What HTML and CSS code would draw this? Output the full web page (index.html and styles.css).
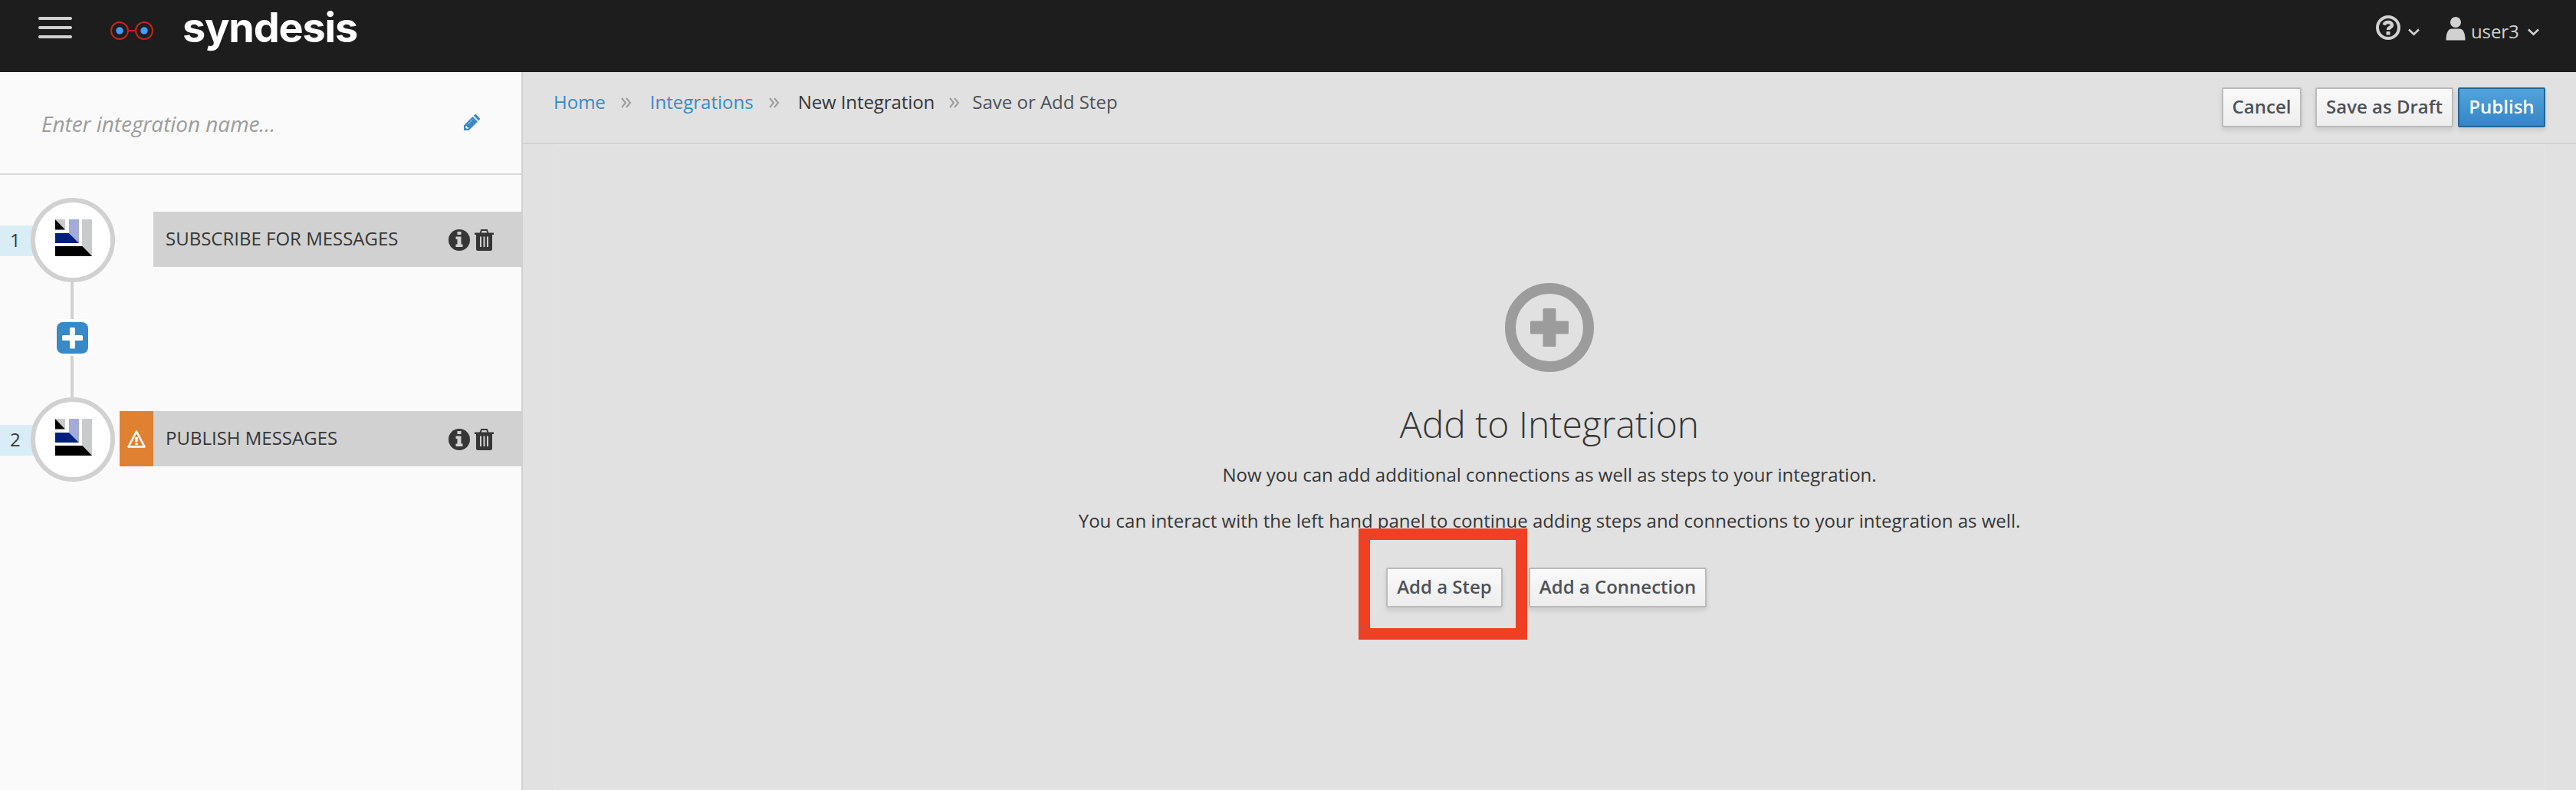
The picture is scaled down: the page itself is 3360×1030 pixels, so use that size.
FILE: index.html
```html
<!DOCTYPE html>
<html lang="en">
<head>
<meta charset="utf-8">
<title>Syndesis</title>
<link rel="stylesheet" href="styles.css">
</head>
<body>
<svg class="defs" width="0" height="0">
  <defs>
    <symbol id="connector" viewBox="0 0 48 48">
      <path fill="#fff" d="M0 0h48v48H0z"/>
      <path fill="#c9cacc" d="M0 0h13v13zM35 0h13v48L35 34z"/>
      <path d="M0 0l13 13.500H0zM0 35h35.500L48 48H0z"/>
      <path fill="#a3acd8" d="M18 0h13v31L18 18z"/>
      <path fill="#00207f" d="M0 18h18l13 13H0z"/>
    </symbol>
    <symbol id="info" viewBox="0 0 28 28">
      <circle cx="14" cy="14" r="14" fill="#363636"/>
      <path fill="#d1d1d1" d="M11.500 3h5v4h-5zM9.500 9.500h7v10h2V23h-9v-3.500h2V13h-2z"/>
    </symbol>
    <symbol id="trash" viewBox="0 0 25 28">
      <path fill="none" stroke="#363636" stroke-width="2" d="M7.500 5l1.500-4h7l1.500 4"/>
      <path fill="#363636" d="M0 4.500h25V7h-2v18.500a2.500 2.500 0 0 1-2.500 2.500h-16A2.500 2.500 0 0 1 2 25.500V7H0z"/>
      <path stroke="#d1d1d1" stroke-width="2" d="M8 9.500V23M12.500 9.500V23M17 9.500V23"/>
    </symbol>
    <symbol id="caret" viewBox="0 0 15 10">
      <path fill="none" stroke="#d1d1d1" stroke-width="2.600" d="M1 1.500l6.500 6.200L14 1.500"/>
    </symbol>
    <symbol id="sep" viewBox="0 0 14 14">
      <path fill="none" stroke="#9c9c9c" stroke-width="2" d="M1 1l5 6-5 6M7 1l5 6-5 6"/>
    </symbol>
  </defs>
</svg>
<header class="masthead">
  <button class="menu" aria-label="Menu"><i></i><i></i><i></i></button>
  <svg class="glasses" width="56" height="24" viewBox="0 0 56 24">
    <g fill="none" stroke="#bd271b" stroke-width="2"><circle cx="12" cy="12" r="11"/><circle cx="44" cy="12" r="11"/><path d="M23 12h10"/></g>
    <g fill="#419ff4"><circle cx="12" cy="12" r="4.700"/><circle cx="44" cy="12" r="4.700"/></g>
  </svg>
  <span class="brand">syndesis</span>
  <svg class="help" width="32" height="32" viewBox="0 0 32 32">
    <circle cx="16" cy="16" r="14" fill="none" stroke="#d1d1d1" stroke-width="4"/>
    <path fill="none" stroke="#d1d1d1" stroke-width="4.400" d="M10.500 12.500c1-2.500 3-3.500 5.500-3.500 3 0 5 1.500 5 3.800 0 3.200-5 2.700-5 6.200"/>
    <path fill="#d1d1d1" d="M13.500 21h5v4.500h-5z"/>
  </svg>
  <svg class="help-caret" width="15" height="10"><use href="#caret"/></svg>
  <svg class="user-icon" width="26" height="31" viewBox="0 0 26 31">
    <circle cx="13" cy="7" r="7" fill="#d1d1d1"/>
    <path fill="#d1d1d1" d="M8 15.500h10c5 0 7.500 6 7.500 15H.5c0-9 2.500-15 7.500-15z"/>
  </svg>
  <span class="user">user3</span>
  <svg class="user-caret" width="15" height="10"><use href="#caret"/></svg>
</header>
<div class="layout">
  <aside class="sidebar">
    <div class="name-row">
      <span class="name">Enter integration name...</span>
      <svg class="pencil" width="21" height="21" viewBox="0 0 21 21">
        <path fill="#3989c6" d="M0 21v-6.500L11.500 3l6.500 6.500L6.500 21zM12.700 1.800L14 .5a1.600 1.600 0 0 1 2.200 0L20.500 4.800a1.600 1.600 0 0 1 0 2.200L19.200 8.300z"/>
        <path fill="#fafafa" d="M2.200 15.500l1.800-.5v2h2l-.5 2H4l-1.800-1.800z"/>
        <path fill="none" stroke="#a9cde8" d="M5 13.200L11.800 6.400"/>
      </svg>
    </div>
    <div class="flow">
      <div class="step">
        <span class="num">1</span>
        <span class="ring"><svg width="48" height="48"><use href="#connector"/></svg></span>
        <span class="flag"></span>
        <div class="card"><span class="label">SUBSCRIBE FOR MESSAGES</span><svg width="28" height="28"><use href="#info"/></svg><svg width="25" height="28"><use href="#trash"/></svg></div>
      </div>
      <div class="link">
        <span class="insert"><svg width="41" height="41" viewBox="0 0 41 41"><rect width="41" height="41" rx="8" fill="#3989c6"/><path fill="#fff" d="M18.500 7h4q1.500 0 1.500 1.500V17h8.500q1.500 0 1.500 1.500v4q0 1.500-1.500 1.500H24v9q0 1.500-1.500 1.500h-4Q17 34.500 17 33v-9H8.500Q7 24 7 22.500v-4Q7 17 8.500 17H17V8.500Q17 7 18.500 7z"/></svg></span>
      </div>
      <div class="step">
        <span class="num">2</span>
        <span class="ring"><svg width="48" height="48"><use href="#connector"/></svg></span>
        <span class="flag warn"><svg width="24" height="23" viewBox="0 0 24 23"><path fill="none" stroke="#fff" stroke-width="2.600" stroke-linejoin="round" d="M12 1.600L22.500 21.500h-21z"/><path fill="#fff" d="M10 9h4l-.6 6.500h-2.800zM10.200 16.700h3.600v2.500h-3.600z"/></svg></span>
        <div class="card"><span class="label">PUBLISH MESSAGES</span><svg width="28" height="28"><use href="#info"/></svg><svg width="25" height="28"><use href="#trash"/></svg></div>
      </div>
    </div>
  </aside>
  <main class="main">
    <div class="toolbar">
      <nav class="crumbs">
        <a>Home</a><svg width="14" height="14"><use href="#sep"/></svg>
        <a>Integrations</a><svg width="14" height="14"><use href="#sep"/></svg>
        <span class="parent">New Integration</span><svg class="last-sep" width="14" height="14"><use href="#sep"/></svg>
        <span class="current">Save or Add Step</span>
      </nav>
      <div class="actions">
        <button class="btn cancel">Cancel</button>
        <button class="btn draft">Save as Draft</button>
        <button class="btn primary">Publish</button>
      </div>
    </div>
    <section class="blank">
      <svg width="116" height="116" viewBox="0 0 116 116"><circle cx="58" cy="58" r="51" fill="none" stroke="#9c9c9c" stroke-width="14"/><path fill="#9c9c9c" d="M51 33h14q1.500 0 1.500 1.500v15h15q1.500 0 1.500 1.500v14q0 1.500-1.500 1.500h-15v15q0 1.500-1.500 1.500H51q-1.500 0-1.500-1.500v-15h-15Q33 66.500 33 65V51q0-1.500 1.500-1.500h15v-15Q49.500 33 51 33z"/></svg>
      <h1>Add to Integration</h1>
      <p>Now you can add additional connections as well as steps to your integration.</p>
      <p>You can interact with the left hand panel to continue adding steps and connections to your integration as well.</p>
      <div class="choices">
        <div class="marked"><button class="btn step-btn">Add a Step</button><i class="marker"></i></div>
        <button class="btn conn-btn">Add a Connection</button>
      </div>
    </section>
  </main>
</div>
</body>
</html>
```
FILE: styles.css
```css
* { box-sizing: border-box; }
body {
  margin: 0;
  height: 1030px;
  overflow: hidden;
  display: flex;
  flex-direction: column;
  background: #e1e1e1;
  color: #363636;
  font: 24px/40px "Open Sans", sans-serif;
}
svg { display: block; flex: none; }
.defs { position: absolute; }
button { border: 0; padding: 0; background: none; font: inherit; }
.masthead {
  height: 94px;
  flex: none;
  display: flex;
  align-items: flex-start;
  padding-left: 50px;
  background: #1d1d1d;
  color: #d1d1d1;
}
.menu { width: 44px; margin-top: 22px; display: flex; flex-direction: column; gap: 8px; }
.menu i { height: 4px; border-radius: 2px; background: #d1d1d1; }
.glasses { margin: 28px 0 0 50px; }
.brand {
  width: 230px;
  margin: 6px 0 0 38px;
  color: #fff;
  font: 700 54px/60px Inter, sans-serif;
  letter-spacing: -1.2px;
  white-space: nowrap;
}
.help { margin: 20px 0 0 auto; }
.help-caret { margin: 37px 34px 0 10px; }
.user-icon { margin-top: 22px; }
.user { width: 64px; margin: 21px 10px 0 7px; font-weight: 500; letter-spacing: -.1px; white-space: nowrap; }
.user-caret { margin: 37px 48px 0 0; }
.layout { flex: 1; display: flex; }
.sidebar { width: 682px; border-right: 2px solid #d1d1d1; background: #fafafa; }
.name-row {
  height: 134px;
  display: flex;
  align-items: center;
  justify-content: space-between;
  padding: 2px 54px 0 54px;
  border-bottom: 2px solid #d9d9d9;
  color: #9c9c9c;
}
.name { font-size: 28px; font-style: italic; letter-spacing: -.06px; }
.pencil { margin-bottom: 3px; }
.flow { padding-top: 30px; }
.step { height: 110px; display: flex; align-items: center; }
.num {
  width: 50px;
  height: 40px;
  margin: 2px -10px 0 0;
  padding-left: 13px;
  background: #d9edf7;
  line-height: 38px;
}
.ring {
  width: 110px;
  height: 110px;
  display: flex;
  justify-content: center;
  padding: 22px 0 0 2px;
  border: 6px solid #d1d1d1;
  border-radius: 50%;
  background: #fff;
  z-index: 1;
}
.flag { width: 44px; height: 72px; margin: -2px 0 0 6px; }
.warn { display: flex; align-items: center; justify-content: center; background: #e08031; }
.card {
  flex: 1;
  height: 72px;
  margin-top: -2px;
  display: flex;
  align-items: center;
  gap: 6px;
  padding: 0 36px 0 16px;
  background: #d1d1d1;
}
.card svg { margin-top: 2px; }
.label { flex: 1; margin-top: -2px; }
.link {
  width: 4px;
  height: 150px;
  margin-left: 92px;
  background: #d1d1d1;
  padding-top: 48px;
}
.insert { display: block; width: 42px; height: 48px; margin-left: -18px; padding-top: 4px; background: #fff; }
.main { flex: 1; }
.toolbar {
  height: 94px;
  display: flex;
  justify-content: space-between;
  padding: 20px 40px 0;
  border-bottom: 2px solid #d1d1d1;
}
.crumbs { display: flex; align-items: center; height: 40px; margin-top: -1px; }
.crumbs a { color: #3989c6; }
.crumbs svg { margin: 2px 24px 0 20px; }
.crumbs .last-sep { margin: 2px 16px 0 19px; }
.parent { letter-spacing: -.08px; }
.current { color: #4d5258; }
.actions { display: flex; }
.btn {
  height: 52px;
  display: block;
  padding-bottom: 2px;
  border: 2px solid #bbb;
  border-radius: 2px;
  background: linear-gradient(#fafafa, #ededed);
  box-shadow: 0 4px 6px rgba(3, 3, 3, .1);
  color: #4d5258;
  font-weight: 600;
  line-height: 46px;
  white-space: nowrap;
}
.cancel { width: 104px; margin-right: 18px; }
.draft { width: 180px; margin-right: 6px; }
.primary { width: 114px; border-color: #21669b; background: linear-gradient(#53a3da, #3585c9); color: #fff; }
.blank {
  height: 842px;
  display: flex;
  flex-direction: column;
  align-items: center;
  margin: 0 40px;
  padding-top: 181px;
  box-shadow: inset 0 0 0 2px #e3e3e3;
}
h1 { margin: 35px 0 0; font-size: 48px; font-weight: 300; line-height: 66px; }
p { margin: 13px 0 0; line-height: 40px; }
p + p { margin-top: 20px; }
.choices { display: flex; gap: 34px; margin: 41px 8px 0 0; }
.marked { position: relative; }
.step-btn { width: 152px; }
.conn-btn { width: 232px; }
.marker { position: absolute; left: -36px; top: -51px; width: 220px; height: 145px; border: 15px solid #ef4023; }
```
